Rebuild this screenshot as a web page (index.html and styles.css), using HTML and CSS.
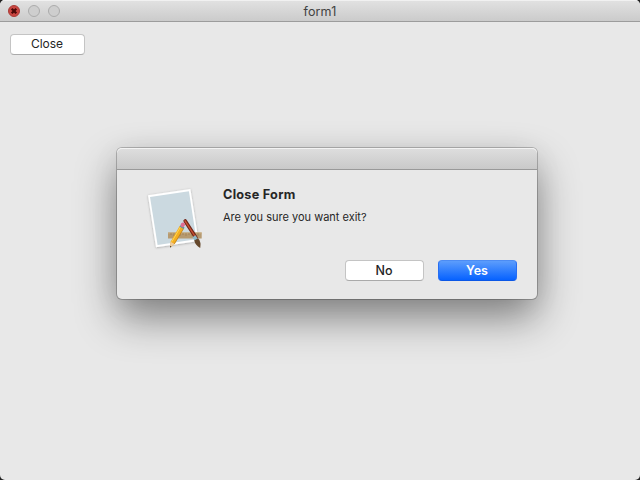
FILE: index.html
```
<!DOCTYPE html>
<html lang="en">
<head>
<meta charset="utf-8">
<title>form1</title>
<link rel="stylesheet" href="styles.css">
</head>
<body>
<div class="window">
  <header class="titlebar">
    <div class="lights">
      <span class="light close"><svg viewBox="0 0 12 12"><path d="M3.7 3.7 8.3 8.3M8.3 3.7 3.7 8.3"/></svg></span>
      <span class="light"></span>
      <span class="light"></span>
    </div>
    <span class="title">form1</span>
  </header>
  <main class="content">
    <button class="btn close-btn"><span>Close</span></button>
  </main>
</div>
<div class="dialog">
  <div class="dialog-bar"></div>
  <div class="dialog-body">
    <svg class="app-icon" viewBox="0 0 64 64">
      <defs>
        <filter id="soft" x="-20%" y="-20%" width="140%" height="140%"><feDropShadow dx="0" dy="0.6" stdDeviation="0.8" flood-opacity=".3"/></filter>
      </defs>
      <path d="M5 9.2 47.4 3 55.6 55 13 61.3Z" fill="#fff" filter="url(#soft)"/>
      <path d="M7 10.9 45.9 5.2 53.4 53.3 14.6 59Z" fill="#cbd9e0"/>
      <path d="M25 46.5H58.7V52.5H25Z" fill="#b69a70"/>
      <path d="M25 47H58.7" stroke="#c9ac7e"/>
      <path d="M28 47v2M31 47v3M34 47v2M37 47v3M40 47v2M43 47v3M46 47v2M49 47v3M52 47v2M55 47v3" stroke="#8c6c43" stroke-width=".5"/>
      <path d="M42.2 35 53 51.8" stroke="#712719" stroke-width="3.6" stroke-linecap="round"/>
      <path d="M42 34.8 52.4 50.8" stroke="#c95133" stroke-width="1.3" stroke-linecap="round"/>
      <path d="M51 50.3 53.3 54" stroke="#8db9c9" stroke-width="3.6"/>
      <path d="M51.2 54.6 55.1 52.3Q58.4 56 57.2 62 52.3 59.4 51.2 54.6Z" fill="#65482c"/>
      <path d="M36.8 39.7 41 42.1 31.5 58 27 61.6 27.6 55.7Z" fill="#f3ae20"/>
      <path d="M37.8 40.4 28.8 55.8" stroke="#ffd653"/>
      <path d="M40.8 42.2 31.3 58" stroke="#b87514" stroke-width=".7"/>
      <path d="M27.6 55.7 31.5 58 27 61.6Z" fill="#edcca1"/>
      <path d="M27.2 59.7 28.5 60.5 27 61.7Z" fill="#382b20"/>
      <path d="M37.2 39.8 41 42.1" stroke="#62959c" stroke-width="2"/>
      <path d="M39.5 39.2 40 38.5" stroke="#df6c91" stroke-width="4" stroke-linecap="round"/>
    </svg>
    <div class="message">
      <h1>Close Form</h1>
      <p>Are you sure you want exit?</p>
    </div>
  </div>
  <div class="actions">
    <button class="btn"><span>No</span></button>
    <button class="btn primary"><span>Yes</span></button>
  </div>
</div>
</body>
</html>
```
FILE: styles.css
```
* { box-sizing: border-box; }
body {
  margin: 0;
  width: 640px;
  height: 480px;
  overflow: hidden;
  background: #222;
  color: #262626;
  font-family: Inter, "Liberation Sans", sans-serif;
}
.window {
  height: 480px;
  border-radius: 5px;
  overflow: hidden;
  background: #e8e8e8;
}
.titlebar {
  height: 22px;
  display: grid;
  grid-template-columns: 1fr auto 1fr;
  align-items: center;
  background: linear-gradient(#e2e2e2, #cbcbcb);
  border-bottom: 1px solid #9c9c9c;
  box-shadow: inset 0 1px #f1f1f1;
}
.lights { display: flex; gap: 8px; padding-left: 8px; }
.light {
  width: 12px;
  height: 12px;
  border: 1px solid #ababab;
  border-radius: 50%;
  background: #cecece;
}
.light.close { background: #c94540; border-color: #a93d38; }
.light svg { display: block; width: 12px; height: 12px; margin: -1px; }
.light path { fill: none; stroke: #4b0907; stroke-width: 2.2; }
.title { font-size: 12.5px; line-height: 18px; color: #424242; padding-top: 3px; letter-spacing: .15px; }
.content { padding: 12px 10px; }
.btn {
  display: flex;
  align-items: center;
  justify-content: center;
  width: 79px;
  height: 21px;
  padding: 0;
  border: 1px solid #c4c4c4;
  border-bottom-color: #aaa;
  border-radius: 4px;
  background: #fff;
  color: #242424;
  font: 500 12.5px/15px Inter, "Liberation Sans", sans-serif;
}
.btn span { position: relative; left: -.5px; }
.close-btn { width: 75px; font-size: 12px; font-weight: 400; }
.close-btn span { top: -1px; }
.primary {
  border-color: #4c8cf4 #276ef3 #0b57e6;
  background: linear-gradient(#5c9dfc, #0762ff);
  color: #fff;
  font-weight: 600;
}
.dialog {
  position: absolute;
  left: 117px;
  top: 148px;
  width: 420px;
  height: 151px;
  border-radius: 5px;
  background: #e8e8e8;
  box-shadow: 0 0 0 1px rgba(0,0,0,.22), 0 19px 42px rgba(0,0,0,.44), 0 4px 30px rgba(0,0,0,.06);
}
.dialog-bar {
  height: 22px;
  border-radius: 5px 5px 0 0;
  border-bottom: 1px solid #999;
  background: linear-gradient(#dedede, #c9c9c9);
  box-shadow: inset 0 1px #f3f3f3;
}
.dialog-body {
  display: flex;
  height: 90px;
  padding: 16px 20px 0 26px;
}
.app-icon { width: 64px; height: 64px; flex: none; }
.message { padding-left: 16px; }
h1 { margin: 0; font-size: 12.7px; line-height: 18px; font-weight: 700; letter-spacing: .25px; }
p { margin: 6px 0 0; font-size: 11px; line-height: 14px; }
.actions { display: flex; justify-content: flex-end; gap: 14px; padding-right: 20px; }
```
